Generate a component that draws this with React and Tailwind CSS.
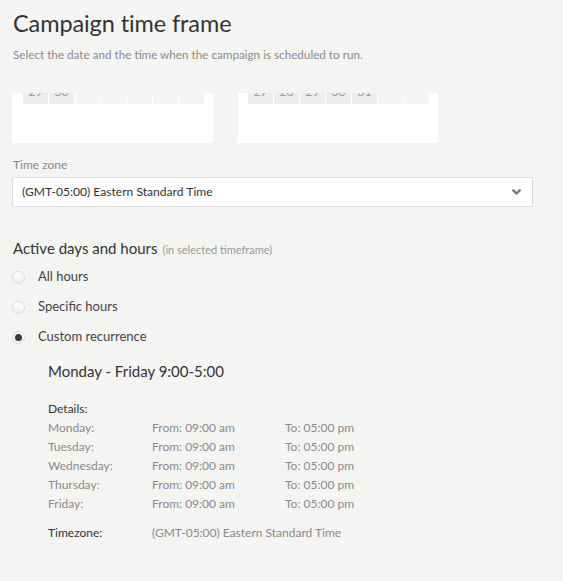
import React from "react";

const days = ["Monday", "Tuesday", "Wednesday", "Thursday", "Friday"];

function CalendarStub({ cells, inset }) {
  return (
    <div className={`h-[50px] bg-white ${inset}`}>
      <div className="flex gap-[1px] h-[11px] overflow-hidden items-end">
        {cells.map((c, i) => (
          <div
            key={i}
            className={`w-[25px] h-[24px] shrink-0 flex items-center justify-center text-[12px] text-[#999] ${
              c ? "bg-[#ececec]" : "bg-[#f4f4f4]"
            }`}
          >
            {c}
          </div>
        ))}
      </div>
    </div>
  );
}

function Radio({ checked, label }) {
  return (
    <div className="flex items-center h-[30px] gap-[13px]">
      <span className="w-[13px] h-[13px] rounded-full border border-[#dadada] bg-gradient-to-b from-white to-[#ededed] flex items-center justify-center">
        {checked && <span className="w-[7px] h-[7px] rounded-full bg-[#3a3a3a]" />}
      </span>
      <span className="text-[13px] text-[#444]">{label}</span>
    </div>
  );
}

export default function App() {
  return (
    <div
      className="min-h-screen bg-[#f4f4f2] px-3 pt-[7px] text-[#333]"
      style={{ fontFamily: "Lato, 'Open Sans', sans-serif" }}
    >
      <h1 className="text-[23.5px] leading-[32px] tracking-[-0.1px] text-[#333] pl-[1px]">Campaign time frame</h1>
      <p className="mt-[6px] text-[11.7px] leading-[18px] text-[#8a8a8a] pl-[1px]">
        Select the date and the time when the campaign is scheduled to run.
      </p>

      <div className="mt-[30px] flex gap-[25px]">
        <CalendarStub cells={["29", "30", "", "", "", "", ""]} inset="w-[201px] pl-[11px]" />
        <CalendarStub cells={["27", "28", "29", "30", "31", "", ""]} inset="w-[200px] pl-[10px]" />
      </div>

      <div className="mt-[14px] text-[12px] leading-[16px] text-[#888] pl-[1px]">Time zone</div>
      <div className="mt-[4px] w-[521px] h-[30px] bg-white border border-[#dcdcdc] rounded-[2px] flex items-center justify-between pl-[9px] pr-[11px]">
        <span className="text-[12.1px] text-[#333]">(GMT-05:00) Eastern Standard Time</span>
        <svg width="9" height="6" viewBox="0 0 9 6">
          <path d="M1.3 1.3 L4.5 4.5 L7.7 1.3" fill="none" stroke="#777" strokeWidth="2.4" strokeLinecap="round" strokeLinejoin="round" />
        </svg>
      </div>

      <div className="mt-[30px] h-[20px] flex items-baseline gap-[5px] pl-[1px]">
        <span className="text-[15px] text-[#333]">Active days and hours</span>
        <span className="text-[11px] text-[#999]">(in selected timeframe)</span>
      </div>

      <div className="mt-[5px]">
        <Radio label="All hours" />
        <Radio label="Specific hours" />
        <Radio label="Custom recurrence" checked />
      </div>

      <div className="pl-[36px]">
        <div className="mt-[9px] text-[15px] leading-[20px] text-[#333]">Monday - Friday 9:00-5:00</div>
        <div className="mt-[18px] text-[12px] leading-[19px] text-[#333]">Details:</div>
        {days.map((d) => (
          <div key={d} className="flex text-[12px] leading-[19px] text-[#8a8a8a]">
            <span className="w-[104px]">{d}:</span>
            <span className="w-[133px]">From: 09:00 am</span>
            <span>To: 05:00 pm</span>
          </div>
        ))}
        <div className="mt-[10px] flex text-[12px] leading-[19px]">
          <span className="w-[104px] text-[#333]">Timezone:</span>
          <span className="text-[#8a8a8a]">(GMT-05:00) Eastern Standard Time</span>
        </div>
      </div>
    </div>
  );
}
